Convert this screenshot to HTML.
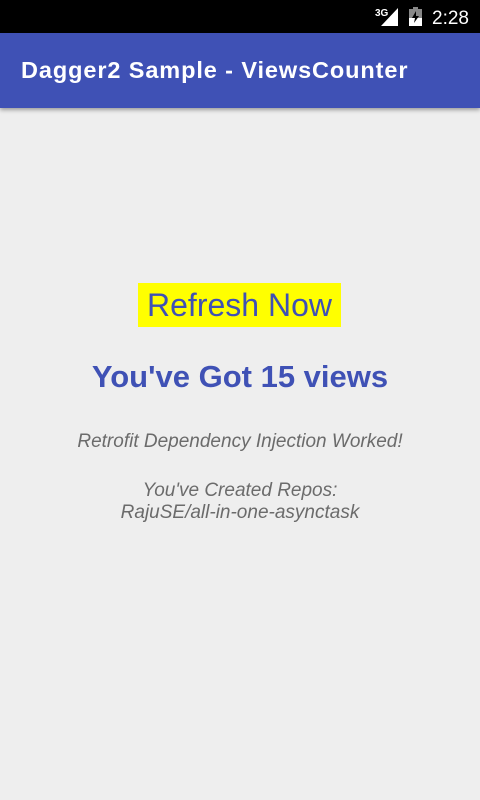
<!DOCTYPE html>
<html><head><meta charset="utf-8"><style>
*{margin:0;padding:0;box-sizing:border-box}
body{width:480px;height:800px;background:#eeeeee;font-family:"Liberation Sans",Roboto,sans-serif;position:relative;overflow:hidden}
.status{position:absolute;top:0;left:0;width:480px;height:33px;background:#000}
.bar{position:absolute;top:33px;left:0;width:480px;height:75px;background:#3f51b5;box-shadow:0 2px 4px rgba(0,0,0,.35)}
.bar h1{position:absolute;left:21px;top:24px;font-size:23.5px;font-weight:bold;color:#fff;letter-spacing:0.9px;white-space:nowrap}
.c{position:absolute;left:0;width:480px;text-align:center}
.btn{position:absolute;left:138px;top:283px;width:203px;height:44px;background:#ffff00;color:#3f51b5;font-size:32px;line-height:44px;text-align:center;white-space:nowrap}
.views{top:359px;font-size:31px;font-weight:bold;color:#3f51b5}
.it{font-style:italic;color:#6b6b6b;font-size:19px;line-height:22px}
</style></head><body>
<div class="status">
<svg width="480" height="33" style="position:absolute;left:0;top:0">
<text x="375" y="16" fill="#fff" font-size="10" font-family="Liberation Sans" font-weight="bold">3G</text>
<polygon points="381,26 398,26 398,8" fill="#fff"/>
<rect x="409" y="9" width="13" height="17" fill="#888"/>
<rect x="413" y="7" width="5" height="2" fill="#888"/>
<rect x="409" y="18" width="13" height="8" fill="#fff"/>
<polygon points="416,11 412,18 415,18 414,23 419,16 416,16" fill="#000"/>
<text x="432" y="24" fill="#fff" font-size="19" font-family="Liberation Sans">2:28</text>
</svg>
</div>
<div class="bar"><h1>Dagger2 Sample - ViewsCounter</h1></div>
<div class="btn">Refresh Now</div>
<div class="c views">You've Got 15 views</div>
<div class="c it" style="top:431px">Retrofit Dependency Injection Worked!</div>
<div class="c it" style="top:480px">You've Created Repos:<br>RajuSE/all-in-one-asynctask</div>
</body></html>
